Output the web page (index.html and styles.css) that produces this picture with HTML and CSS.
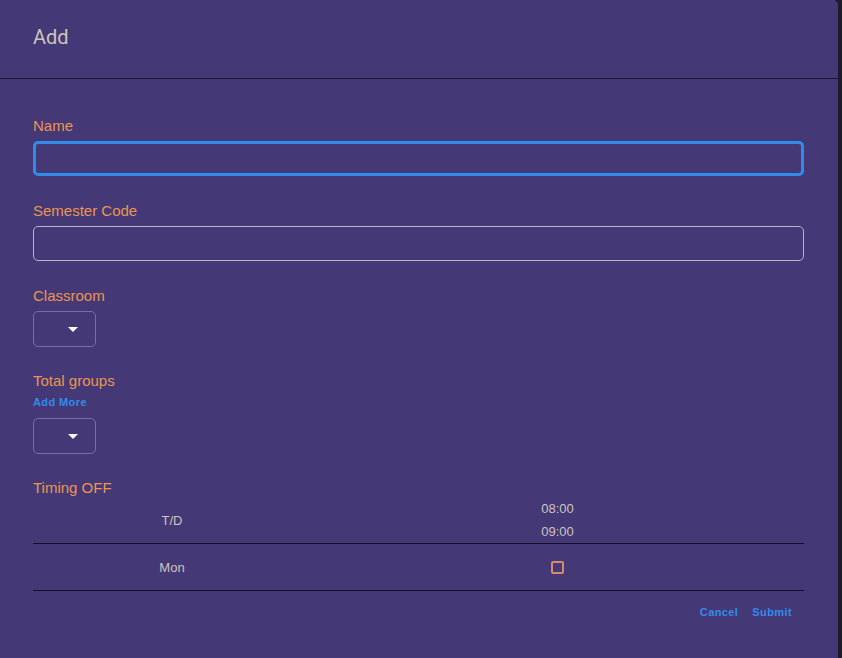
FILE: index.html
```html
<!DOCTYPE html>
<html>
<head>
<meta charset="utf-8">
<link rel="stylesheet" href="styles.css">
</head>
<body>
<div class="dialog">
  <div class="dialog-title">Add</div>
  <div class="dialog-content">
    <div class="field">
      <div class="label">Name</div>
      <div class="input input-focused"></div>
    </div>
    <div class="field">
      <div class="label">Semester Code</div>
      <div class="input"></div>
    </div>
    <div class="field field-select">
      <div class="label">Classroom</div>
      <div class="select"><svg width="10" height="5" viewBox="0 0 10 5"><path d="M0 0h10L5 5z" fill="#ffffff"/></svg></div>
    </div>
    <div class="field field-select">
      <div class="label">Total groups</div>
      <div class="add-more">Add More</div>
      <div class="select"><svg width="10" height="5" viewBox="0 0 10 5"><path d="M0 0h10L5 5z" fill="#ffffff"/></svg></div>
    </div>
    <div class="field field-last">
      <div class="label">Timing OFF</div>
      <div class="table">
        <div class="trow thead">
          <div class="cell c1">T/D</div>
          <div class="cell c2"><div class="time">08:00</div><div class="time">09:00</div></div>
        </div>
        <div class="trow">
          <div class="cell c1 body-cell">Mon</div>
          <div class="cell c2 body-cell"><span class="checkbox"></span></div>
        </div>
      </div>
    </div>
    <div class="actions">
      <span class="btn">Cancel</span>
      <span class="btn">Submit</span>
    </div>
  </div>
</div>
</body>
</html>
```
FILE: styles.css
```css
html, body {
  margin: 0;
  padding: 0;
  height: 100%;
  background: #1f1a30;
  overflow: hidden;
}
.dialog {
  width: 838px;
  height: 658px;
  background: #453877;
  border-top-right-radius: 5px;
  font-family: "Liberation Sans", Arial, sans-serif;
}
.dialog-title {
  height: 79px;
  box-sizing: border-box;
  padding: 21px 33px 0;
  font-family: Roboto, "Liberation Sans", sans-serif;
  font-size: 20px;
  line-height: 32px;
  color: #cdc5b8;
  border-bottom: 1px solid #1d1830;
}
.dialog-content {
  padding: 38px 34px 0 33px;
}
.field {
  margin-bottom: 26px;
}
.field-select {
  margin-bottom: 25px;
}
.field-last {
  margin-bottom: 0;
}
.label {
  font-size: 15px;
  line-height: 18px;
  color: #ea9550;
  margin-bottom: 6px;
}
.input {
  height: 35px;
  box-sizing: border-box;
  border: 1px solid #bcb4c0;
  border-radius: 5px;
}
.input-focused {
  border: 3px solid #2f8ceb;
}
.select {
  width: 63px;
  height: 36px;
  box-sizing: border-box;
  border: 1px solid #7a6ca8;
  border-radius: 5px;
  display: flex;
  align-items: center;
  justify-content: flex-end;
  padding-right: 17px;
}
.add-more {
  font-size: 11px;
  font-weight: bold;
  letter-spacing: 0.4px;
  color: #2f8ceb;
  line-height: 13px;
  margin-top: 4px;
  margin-bottom: 9px;
}
.table {
  margin-top: -6px;
}
.trow {
  display: flex;
  border-bottom: 1px solid #15112a;
}
.cell {
  display: flex;
  flex-direction: column;
  align-items: center;
  justify-content: center;
  font-size: 13px;
  color: #cdc5bb;
}
.c1 { width: 278px; }
.c2 { flex: 1; }
.time {
  line-height: 23px;
}
.body-cell {
  height: 46px;
}
.checkbox {
  width: 13px;
  height: 13px;
  box-sizing: border-box;
  border: 2px solid #d48a6c;
  border-radius: 2px;
}
.actions {
  display: flex;
  justify-content: flex-end;
  gap: 14px;
  padding-right: 12px;
  margin-top: 11px;
}
.btn {
  font-size: 11px;
  font-weight: bold;
  letter-spacing: 0.4px;
  line-height: 20px;
  color: #2f8ceb;
}
```
